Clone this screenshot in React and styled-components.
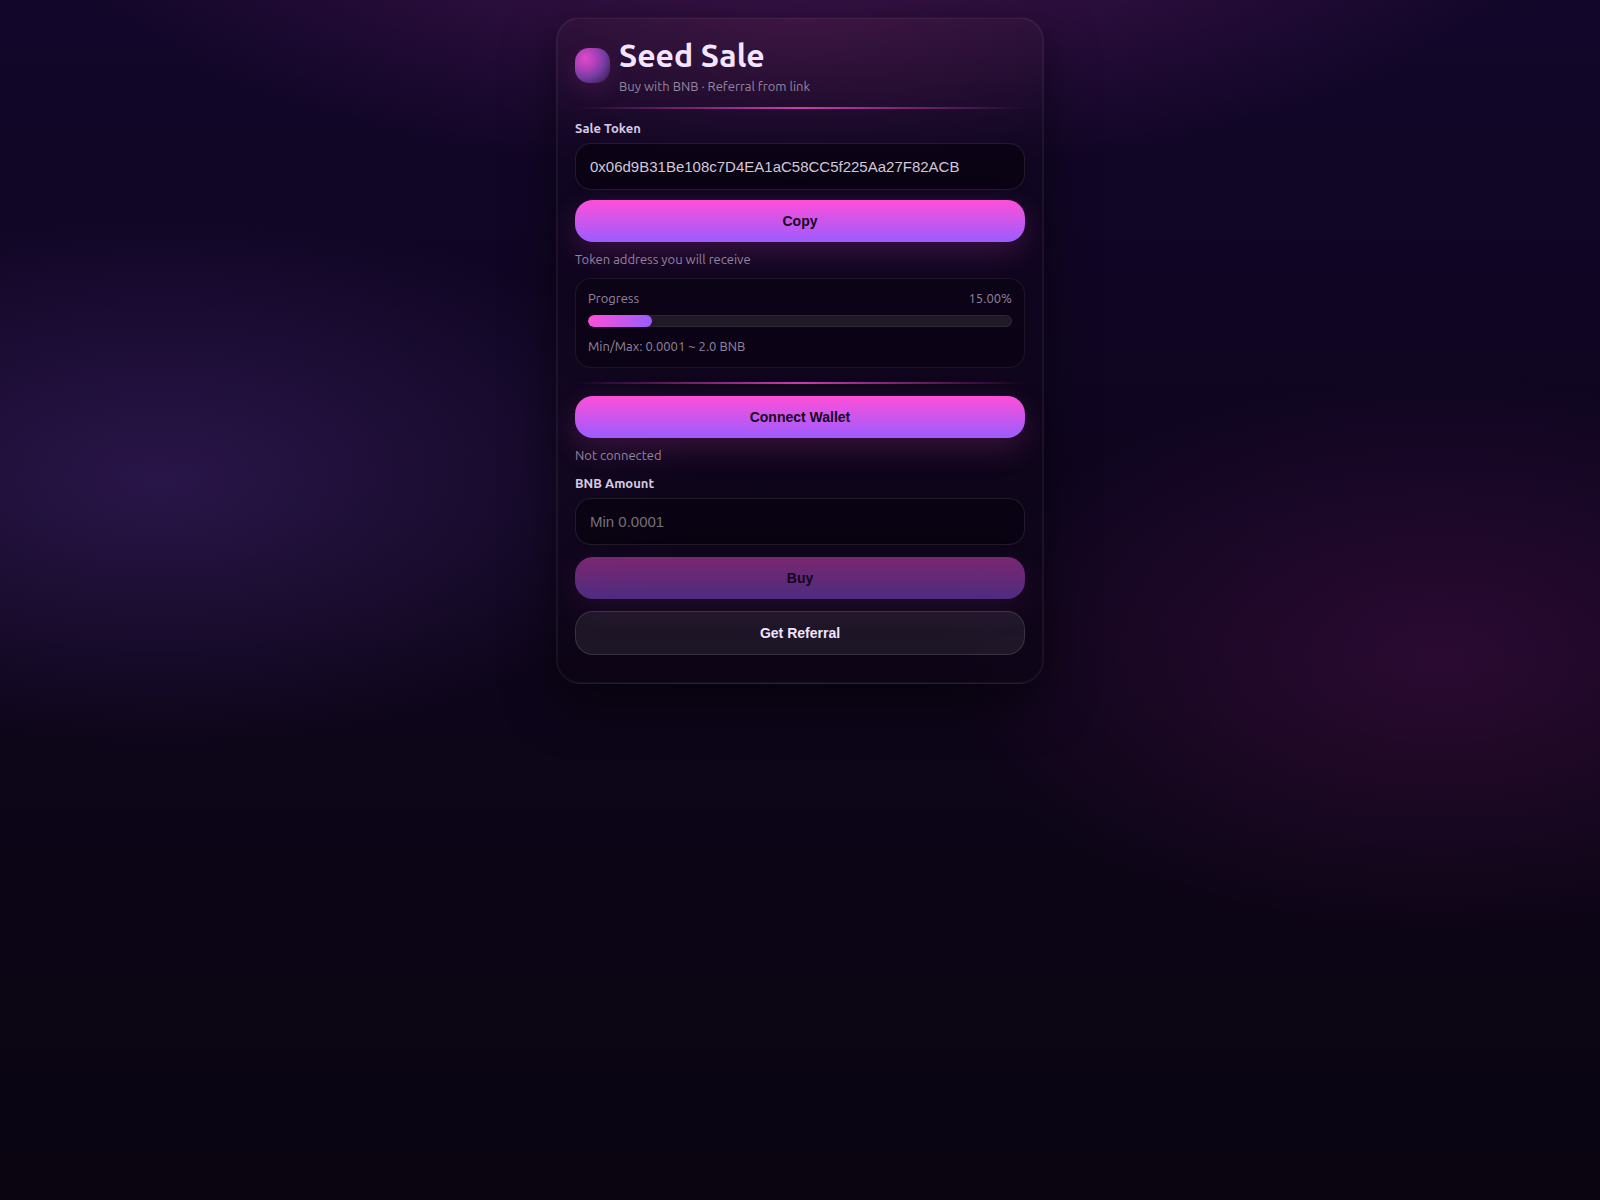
import { useState } from "react";
import styled, { createGlobalStyle } from "styled-components";

const TOKEN_ADDRESS = "0x06d9B31Be108c7D4EA1aC58CC5f225Aa27F82ACB";

const GlobalStyle = createGlobalStyle`
  * {
    box-sizing: border-box;
  }
  body {
    margin: 0;
    min-height: 100vh;
    color: #f3e4ff;
    font-family: Ubuntu, "Noto Sans", sans-serif;
    background:
      radial-gradient(1300px 500px at 50% -10%, rgba(255, 79, 216, 0.23), transparent 60%),
      radial-gradient(900px 450px at 10% 40%, rgba(155, 92, 255, 0.19), transparent 60%),
      radial-gradient(900px 500px at 90% 55%, rgba(255, 43, 214, 0.12), transparent 56%),
      linear-gradient(180deg, #12062a 0%, #0d0518 65%, #0a0511 100%);
    background-repeat: no-repeat;
  }
`;

const Wrapper = styled.main`
  max-width: 520px;
  margin: 0 auto;
  padding: 17px 16px;
`;

const Card = styled.section`
  padding: 18px 18px 28px;
  border: 1px solid rgba(255, 255, 255, 0.06);
  border-radius: 24px;
  background:
    radial-gradient(ellipse 400px 140px at 50% 0, rgba(255, 79, 160, 0.09), transparent),
    linear-gradient(180deg, rgba(255, 140, 255, 0.02), transparent 130px),
    linear-gradient(180deg, rgba(18, 9, 30, 0.3), rgba(12, 5, 20, 0.6));
  box-shadow:
    0 18px 50px rgba(0, 0, 0, 0.5),
    inset 0 0 0 1px rgba(255, 255, 255, 0.05);
`;

const Header = styled.header`
  display: flex;
  align-items: center;
  gap: 9px;
`;

const Logo = styled.div`
  width: 35px;
  height: 35px;
  border-radius: 14px;
  background: radial-gradient(circle at 30% 30%, #e04ac8, #b040ba 30%, #743da4 56%, #46225f 84%);
  box-shadow: 0 8px 24px rgba(255, 79, 216, 0.1);
`;

const Title = styled.h1`
  margin: 0 0 3px;
  font-size: 32px;
  line-height: 38px;
  font-weight: 700;
`;

const Muted = styled.p`
  margin: 0;
  font-size: 13px;
  line-height: 18px;
  color: #94849f;
`;

const Hint = styled(Muted)`
  margin: 8px 0 10px;
`;

const Divider = styled.hr`
  height: 2px;
  margin: ${(props) => (props.$wide ? "14px 0 12px" : "12px 0 10px")};
  border: 0;
  background: linear-gradient(90deg, transparent, #c83eb0, transparent);
`;

const Label = styled.label`
  display: block;
  margin-bottom: 6px;
  font-size: 13px;
  line-height: 18px;
  font-weight: 700;
  color: #d6cae2;
`;

const Input = styled.input`
  display: block;
  width: 100%;
  height: 47px;
  padding: 0 14px;
  border: 1px solid rgba(255, 255, 255, 0.1);
  border-radius: 16px;
  outline: none;
  background: rgba(8, 2, 14, 0.65);
  color: #d2c8da;
  font-family: "Liberation Sans", Arial, sans-serif;
  font-size: 15px;
  &::placeholder {
    color: #757075;
  }
`;

const Button = styled.button`
  display: block;
  width: 100%;
  height: 42px;
  margin-top: ${(props) => props.$gap || 0}px;
  border: 0;
  border-radius: 18px;
  background: linear-gradient(180deg, #ff4fd8, #9b5cff);
  box-shadow: 0 10px 30px rgba(255, 79, 216, 0.18);
  color: #14061f;
  font-family: "Liberation Sans", Arial, sans-serif;
  font-size: 14px;
  font-weight: 700;
  cursor: pointer;
  &:disabled {
    opacity: 0.45;
    cursor: not-allowed;
  }
`;

const GhostButton = styled(Button)`
  height: 44px;
  border: 1px solid rgba(255, 255, 255, 0.12);
  background: rgba(255, 255, 255, 0.07);
  box-shadow: none;
  color: #f3e4ff;
`;

const Panel = styled.div`
  padding: 10px 12px 12px;
  border: 1px solid rgba(255, 255, 255, 0.08);
  border-radius: 16px;
  background: rgba(8, 2, 14, 0.5);
`;

const PanelRow = styled.div`
  display: flex;
  justify-content: space-between;
`;

const Track = styled.div`
  height: 12px;
  margin: 8px 0 10px;
  border-radius: 6px;
  overflow: hidden;
  background: #201927;
  box-shadow: inset 0 0 0 1px rgba(255, 255, 255, 0.06);
`;

const Fill = styled.div`
  height: 100%;
  border-radius: 6px;
  background: linear-gradient(90deg, #ff4fd8, #9b5cff);
`;

export default function App() {
  const [amount, setAmount] = useState("");
  const progress = 15;
  return (
    <>
      <GlobalStyle />
      <Wrapper>
        <Card>
          <Header>
            <Logo />
            <div>
              <Title>Seed Sale</Title>
              <Muted>Buy with BNB · Referral from link</Muted>
            </div>
          </Header>
          <Divider />
          <Label htmlFor="token">Sale Token</Label>
          <Input id="token" value={TOKEN_ADDRESS} readOnly />
          <Button
            type="button"
            $gap={10}
            onClick={() => navigator.clipboard?.writeText(TOKEN_ADDRESS)}
          >
            Copy
          </Button>
          <Hint>Token address you will receive</Hint>
          <Panel>
            <PanelRow>
              <Muted>Progress</Muted>
              <Muted>{progress.toFixed(2)}%</Muted>
            </PanelRow>
            <Track
              role="progressbar"
              aria-label="Progress"
              aria-valuenow={progress}
              aria-valuemin={0}
              aria-valuemax={100}
            >
              <Fill style={{ width: `${progress}%` }} />
            </Track>
            <Muted>Min/Max: 0.0001 ~ 2.0 BNB</Muted>
          </Panel>
          <Divider $wide />
          <Button type="button">Connect Wallet</Button>
          <Hint>Not connected</Hint>
          <Label htmlFor="amount">BNB Amount</Label>
          <Input
            id="amount"
            placeholder="Min 0.0001"
            inputMode="decimal"
            value={amount}
            onChange={(e) => setAmount(e.target.value)}
          />
          <Button type="button" $gap={12} disabled>
            Buy
          </Button>
          <GhostButton type="button" $gap={12}>
            Get Referral
          </GhostButton>
        </Card>
      </Wrapper>
    </>
  );
}
